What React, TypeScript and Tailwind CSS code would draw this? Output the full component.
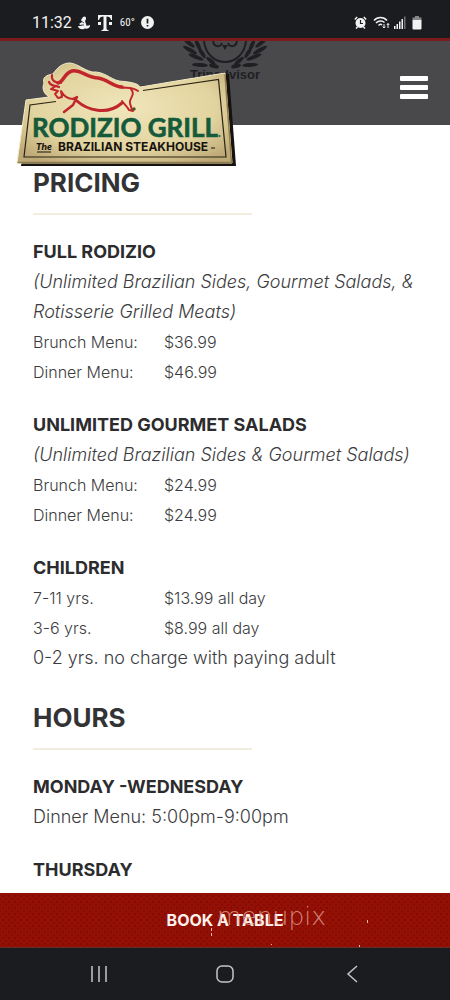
import React from "react";

type Price = { label: string; price: string };

function Laurel({ flip = false }: { flip?: boolean }) {
  return (
    <g transform={flip ? "translate(90 0) scale(-1 1)" : undefined} fill="#1f1f23">
      <ellipse cx="9" cy="2" rx="7" ry="2" transform="rotate(38 9 2)" />
      <ellipse cx="10" cy="9" rx="8" ry="2" transform="rotate(30 10 9)" />
      <ellipse cx="16" cy="16" rx="8" ry="2" transform="rotate(22 16 16)" />
      <ellipse cx="20" cy="24" rx="8" ry="2" transform="rotate(4 20 24)" />
      <ellipse cx="18" cy="4" rx="6" ry="2" transform="rotate(65 18 4)" />
      <ellipse cx="22" cy="12" rx="6" ry="2" transform="rotate(58 22 12)" />
      <ellipse cx="31" cy="20" rx="6" ry="2" transform="rotate(40 31 20)" />
      <ellipse cx="34" cy="25" rx="5" ry="2" transform="rotate(14 34 25)" />
    </g>
  );
}

function TripBadge() {
  return (
    <div className="absolute left-1/2 top-0 flex w-[90px] -translate-x-1/2 flex-col items-center">
      <svg viewBox="0 0 90 28" className="h-7 w-[90px]" aria-hidden="true">
        <Laurel />
        <Laurel flip />
        <g fill="none" stroke="#1f1f23" strokeWidth="2">
          <path d="M24 0C25 12 34 21 45 21S65 12 66 0" />
          <path d="M33 0C34 6 40 7 42 2M57 0C56 6 50 7 48 2" />
        </g>
        <path d="M42 4H48L45 9Z" fill="#1f1f23" />
      </svg>
      <span className="font-['Liberation_Sans'] text-[13px] font-bold leading-3 text-[#1f1f23]">Tripadvisor</span>
    </div>
  );
}

function Logo() {
  return (
    <svg viewBox="14 58 226 112" className="h-28 w-[226px]" role="img" aria-label="Rodizio Grill, the Brazilian Steakhouse">
      <defs>
        <radialGradient id="board" cx="50%" cy="45%" r="65%">
          <stop offset="0" stopColor="#f0e6bb" />
          <stop offset="0.65" stopColor="#e2d49f" />
          <stop offset="1" stopColor="#bda977" />
        </radialGradient>
      </defs>
      <path d="M30 101L229 74L236 166H21Z" fill="#15120f" />
      <path
        d="M26 100L49 97C43 93 42 88 44 83C42 77 47 75 53 74C57 68 62 63 70 63C78 64 82 69 92 72C104 71 110 79 119 81C130 82 138 83 140 87L225 73L232 163H17Z"
        fill="url(#board)"
        stroke="#f3ebca"
        strokeWidth="1"
      />
      <path d="M17.500 162.500H231.500L225 74" fill="none" stroke="#8f7a4a" strokeWidth="1.500" />
      <path d="M56 101.500L30 105L24 157H226L218.500 79.500L143 90.500" fill="none" stroke="#2b2415" strokeWidth="1.200" />
      <g fill="none" stroke="#c2262d" strokeLinecap="round" strokeLinejoin="round">
        <path d="M58 83C64 82 64 73 72 71C80 69 88 78 98 78C107 79 113 87 122 87" strokeWidth="3.500" />
        <path d="M120 87C126 89 131 86 138 91" strokeWidth="2" />
        <path d="M131 89C136 95 129 98 130 103C131 107 131 108 133 111L129 110C127 106 124 104 122 101" strokeWidth="2" />
        <path d="M77 101C87 110 107 116 122 103" strokeWidth="3" />
        <path d="M64 112L73 105L77 97L73 99" strokeWidth="2.500" />
        <path d="M49 82C51 87 55 85 59 87M52 75C51 81 56 83 61 83" strokeWidth="2.200" />
        <path d="M56 86L51 89L58 91L55 94L58 98L62 97L61 91C64 96 67 99 74 99" strokeWidth="2" />
      </g>
      <circle cx="134" cy="109" r="1.700" fill="#54512f" />
      <text x="32" y="137" fontFamily="Lato, sans-serif" fontWeight="700" fontSize="26" fill="#155b3b" stroke="#155b3b" strokeWidth="0.600">
        RODIZIO GRILL
      </text>
      <circle cx="219.500" cy="136" r="1" fill="#155b3b" />
      <text x="36" y="150" fontFamily="Lato, sans-serif" fontStyle="italic" fontWeight="900" fontSize="10" fill="#17130d">
        The
      </text>
      <path d="M37 152H51" stroke="#17130d" strokeWidth="1" />
      <text x="58" y="151" fontFamily="Inter, sans-serif" fontWeight="700" fontSize="12" fill="#17130d">
        BRAZILIAN STEAKHOUSE
      </text>
      <path d="M211 148H215" stroke="#17130d" strokeWidth="1" />
    </svg>
  );
}

function StatusBar() {
  return (
    <div className="flex h-[38px] items-center justify-between bg-[#1b1c20] pl-8 pr-7 pt-[7px] font-['Roboto'] text-[#f2f2f2]">
      <div className="flex items-center gap-1.5">
        <span className="text-base leading-5">11:32</span>
        <svg viewBox="0 0 12 14" className="h-3.5 w-3" fill="currentColor" aria-hidden="true">
          <path d="M5 1C8-1 9 3 7 5L8 8C9 10 8 12 6 13C3 14 0 12 0 10L4 10L1 8L4 6L3 4Z" />
          <path d="M8 10C11 9 12 10 12 8C13 12 9 14 6 12Z" />
          <path d="M3 5L6 7M3 9L6 9" stroke="#1b1c20" strokeWidth="0.800" />
        </svg>
        <svg viewBox="0 0 14 16" className="ml-0.5 h-4 w-3.5" fill="currentColor" aria-hidden="true">
          <path d="M0 0H14V5H13C12.500 2.500 11 1.500 8.500 1.500V13C8.500 14.500 9 15 10.500 15V16H3.500V15C5 15 5.500 14.500 5.500 13V1.500C3 1.500 1.500 2.500 1 5H0ZM0 7H3V10H0ZM11 7H14V10H11Z" />
        </svg>
        <span className="ml-0.5 font-['Roboto_Condensed','Roboto'] text-[11px] leading-5">60°</span>
        <svg viewBox="0 0 12 12" className="size-[13px]" aria-hidden="true">
          <circle cx="6" cy="6" r="6" fill="currentColor" />
          <path d="M6 2.500V7M6 8.300V9.800" stroke="#1b1c20" strokeWidth="1.600" />
        </svg>
      </div>
      <div className="flex items-center gap-1">
        <svg viewBox="0 0 13 13" className="size-[13px]" aria-hidden="true">
          <circle cx="6.500" cy="7" r="5" fill="currentColor" />
          <path d="M0.800 3.500L3.200 1M12.200 3.500L9.800 1M2 12.500L3.500 11M11 12.500L9.500 11" stroke="currentColor" strokeWidth="1.500" />
          <path d="M6.500 4V7.500H9" fill="none" stroke="#1b1c20" strokeWidth="1.200" />
        </svg>
        <svg viewBox="0 0 17 13" className="ml-0.5 h-[13px] w-[17px]" fill="none" stroke="currentColor" strokeWidth="1.500" aria-hidden="true">
          <path d="M1 4.500C4.500 0.500 10.500 0.500 14 4.500M3 7C5.500 4.500 9.500 4.500 11.500 6.500M5.500 9.500C7 8 8 8 9 9" />
          <path d="M11 8V12M9.800 10.500L11 12L12.200 10.500M15 12V7.500M13.800 9L15 7.500L16.200 9" strokeWidth="1" />
        </svg>
        <svg viewBox="0 0 12 13" className="h-[13px] w-3" fill="currentColor" aria-hidden="true">
          <path d="M0 10H1.500V13H0ZM2.500 8H4V13H2.500ZM5 5.500H6.500V13H5ZM7.500 3H9V13H7.500Z" />
          <path d="M10 0.500H11.500V13H10Z" opacity="0.400" />
        </svg>
        <svg viewBox="0 0 10 14" className="ml-0.5 h-3.5 w-2.5" fill="currentColor" aria-hidden="true">
          <path d="M3 0H7V1.500H9.500V4H0.500V1.500H3Z" opacity="0.500" />
          <path d="M0.500 4H9.500V12.500Q9.500 13.500 8.500 13.500H1.500Q0.500 13.500 0.500 12.500Z" />
        </svg>
      </div>
    </div>
  );
}

function Title({ children }: { children: React.ReactNode }) {
  return (
    <>
      <h2 className="text-[26px] font-bold leading-[30px] text-[#333335]">{children}</h2>
      <hr className="mb-[22px] mt-[15px] h-0.5 w-[57%] border-0 bg-[#f1eee0]" />
    </>
  );
}

function Group({ name, note, prices = [], children }: { name: string; note?: string; prices?: Price[]; children?: React.ReactNode }) {
  return (
    <section>
      <h3 className="text-lg font-bold leading-[30px] text-[#2c2c2e]">{name}</h3>
      {note && <p className="text-lg italic leading-[30px]">{note}</p>}
      {prices.length > 0 && (
        <table className="w-full text-left text-base leading-[30px]">
          <tbody>
            {prices.map((row) => (
              <tr key={row.label}>
                <th scope="row" className="w-[131px] p-0 font-light">{row.label}</th>
                <td className="p-0">{row.price}</td>
              </tr>
            ))}
          </tbody>
        </table>
      )}
      {children}
    </section>
  );
}

export default function App() {
  return (
    <div className="flex min-h-screen flex-col bg-white font-['Inter',sans-serif]">
      <StatusBar />
      <header className="relative flex h-[87px] items-center justify-end border-t-3 border-[#7d1a1b] bg-[#49494c] pr-[22px] pt-2">
        <TripBadge />
        <a href="#home" className="absolute left-3.5 top-[17px]">
          <Logo />
        </a>
        <button type="button" aria-label="Open menu" className="flex w-7 flex-col gap-1">
          <span className="h-[5px] w-full rounded-[1px] bg-white" />
          <span className="h-[5px] w-full rounded-[1px] bg-white" />
          <span className="h-[5px] w-full rounded-[1px] bg-white" />
        </button>
      </header>

      <main className="flex-1 px-[33px] pb-2 pt-[43px] font-light text-[#3c3c3e]">
        <Title>PRICING</Title>
        <div className="flex flex-col gap-[23px]">
          <Group
            name="FULL RODIZIO"
            note="(Unlimited Brazilian Sides, Gourmet Salads, & Rotisserie Grilled Meats)"
            prices={[
              { label: "Brunch Menu:", price: "$36.99" },
              { label: "Dinner Menu:", price: "$46.99" },
            ]}
          />
          <Group
            name="UNLIMITED GOURMET SALADS"
            note="(Unlimited Brazilian Sides & Gourmet Salads)"
            prices={[
              { label: "Brunch Menu:", price: "$24.99" },
              { label: "Dinner Menu:", price: "$24.99" },
            ]}
          />
          <Group
            name="CHILDREN"
            prices={[
              { label: "7-11 yrs.", price: "$13.99 all day" },
              { label: "3-6 yrs.", price: "$8.99 all day" },
            ]}
          >
            <p className="text-lg leading-[30px]">0-2 yrs. no charge with paying adult</p>
          </Group>
        </div>
        <div className="pt-[30px]">
          <Title>HOURS</Title>
        </div>
        <div className="flex flex-col gap-[23px]">
          <Group name="MONDAY -WEDNESDAY">
            <p className="text-lg leading-[30px]">Dinner Menu: 5:00pm-9:00pm</p>
          </Group>
          <Group name="THURSDAY" />
        </div>
      </main>

      <footer>
        <a
          href="#book"
          className="relative flex h-[55px] items-center justify-center border-b border-[#63302c] bg-[#941004] bg-[radial-gradient(circle,#800d05_1px,transparent_1.5px),radial-gradient(circle,#840e05_1px,transparent_1.5px)] bg-[length:6px_6px] bg-[position:0_0,3px_3px] text-base font-bold text-[#fff1ec]"
        >
          BOOK A TABLE
          <span className="absolute left-[217px] top-2.5 font-['DejaVu_Sans'] text-[25px] font-extralight leading-7 text-[#e3a59a]/80">menupix</span>
          <svg viewBox="0 0 160 40" className="absolute left-[210px] top-[15px] h-10 w-40" fill="#f0b5a8" aria-hidden="true">
            <path d="M1 20H2V23H1ZM1 25H2V28H1ZM157 12H158V15H157ZM61 36H62V37H61ZM149 37H150V39H149Z" />
          </svg>
        </a>
        <nav aria-label="System" className="flex h-[52px] items-center justify-evenly bg-[#1b1c20] text-[#c5c6c9]">
          <button type="button" aria-label="Recent apps" className="flex h-10 w-14 items-center justify-center">
            <svg viewBox="0 0 18 18" className="size-[18px]" fill="none" stroke="currentColor" strokeWidth="1.500">
              <path d="M2 1V17M9 1V17M16 1V17" />
            </svg>
          </button>
          <button type="button" aria-label="Home" className="flex h-10 w-14 items-center justify-center">
            <svg viewBox="0 0 18 18" className="size-[18px]" fill="none" stroke="currentColor" strokeWidth="1.500">
              <rect x="1" y="1" width="16" height="16" rx="5" />
            </svg>
          </button>
          <button type="button" aria-label="Back" className="flex h-10 w-14 items-center justify-center">
            <svg viewBox="0 0 18 18" className="size-[18px]" fill="none" stroke="currentColor" strokeWidth="1.500">
              <path d="M14 1L5 9L14 17" />
            </svg>
          </button>
        </nav>
      </footer>
    </div>
  );
}
